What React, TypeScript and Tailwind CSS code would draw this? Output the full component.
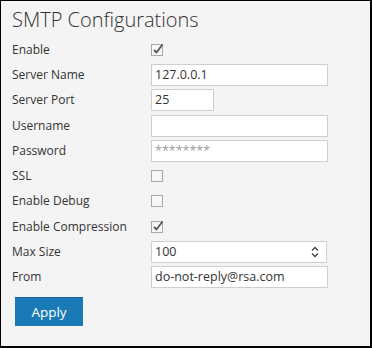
import type { ReactNode } from 'react'

const font = { fontFamily: '"Open Sans", "Liberation Sans", sans-serif' }

const Check = ({ checked }: { checked?: boolean }) => (
  <svg width="14" height="14" viewBox="0 0 14 14" className="-mt-[2px]">
    <rect x="0.5" y="2.5" width="11" height="11" fill="#f7f7f7" stroke="#a8a8a8" />
    {checked && (
      <path d="M3 8 L5.5 10.5 L11.5 2.5" fill="none" stroke="#555" strokeWidth="1.8" />
    )}
  </svg>
)

const Field = ({ value, w = 'w-[177px]', muted, children }: { value?: string; w?: string; muted?: boolean; children?: ReactNode }) => (
  <div className={`${w} h-[22px] bg-white border border-[#cfcfcf] flex items-center pl-[3px] pr-[6px] text-[12.5px] ${muted ? 'text-[#a0a0a0]' : 'text-[#333]'}`}>
    <span className="flex-1 leading-none">{value}</span>
    {children}
  </div>
)

const Row = ({ label, children }: { label: string; children: ReactNode }) => (
  <div className="flex items-center h-[25.3px]">
    <div className="w-[139px] text-[12px] text-[#333]">{label}</div>
    {children}
  </div>
)

export default function App() {
  return (
    <div
      style={font}
      className="w-[372px] h-[348px] bg-[#f4f4f4] border-l border-t border-r-2 border-b-2 border-black pl-[11px]"
    >
      <h1 className="text-[20px] font-light text-[#333] h-[36px] pt-[4px] leading-[30px]">SMTP Configurations</h1>
      <Row label="Enable"><Check checked /></Row>
      <Row label="Server Name"><Field value="127.0.0.1" /></Row>
      <Row label="Server Port"><Field value="25" w="w-[63px]" /></Row>
      <Row label="Username"><Field /></Row>
      <Row label="Password"><Field value="********" muted /></Row>
      <Row label="SSL"><Check /></Row>
      <Row label="Enable Debug"><Check /></Row>
      <Row label="Enable Compression"><Check checked /></Row>
      <Row label="Max Size">
        <Field value="100" w="w-[176px]">
          <svg width="10" height="14" viewBox="0 0 10 14">
            <path d="M2 5.5 L5 2.5 L8 5.5 M2 8.5 L5 11.5 L8 8.5" fill="none" stroke="#444" strokeWidth="1.4" />
          </svg>
        </Field>
      </Row>
      <Row label="From"><Field value="do-not-reply@rsa.com" /></Row>
      <button className="mt-[7px] ml-[3px] w-[68px] h-[29px] bg-[#1a7ab5] border-t border-[#12649a] text-white text-[13.5px]">
        Apply
      </button>
    </div>
  )
}
